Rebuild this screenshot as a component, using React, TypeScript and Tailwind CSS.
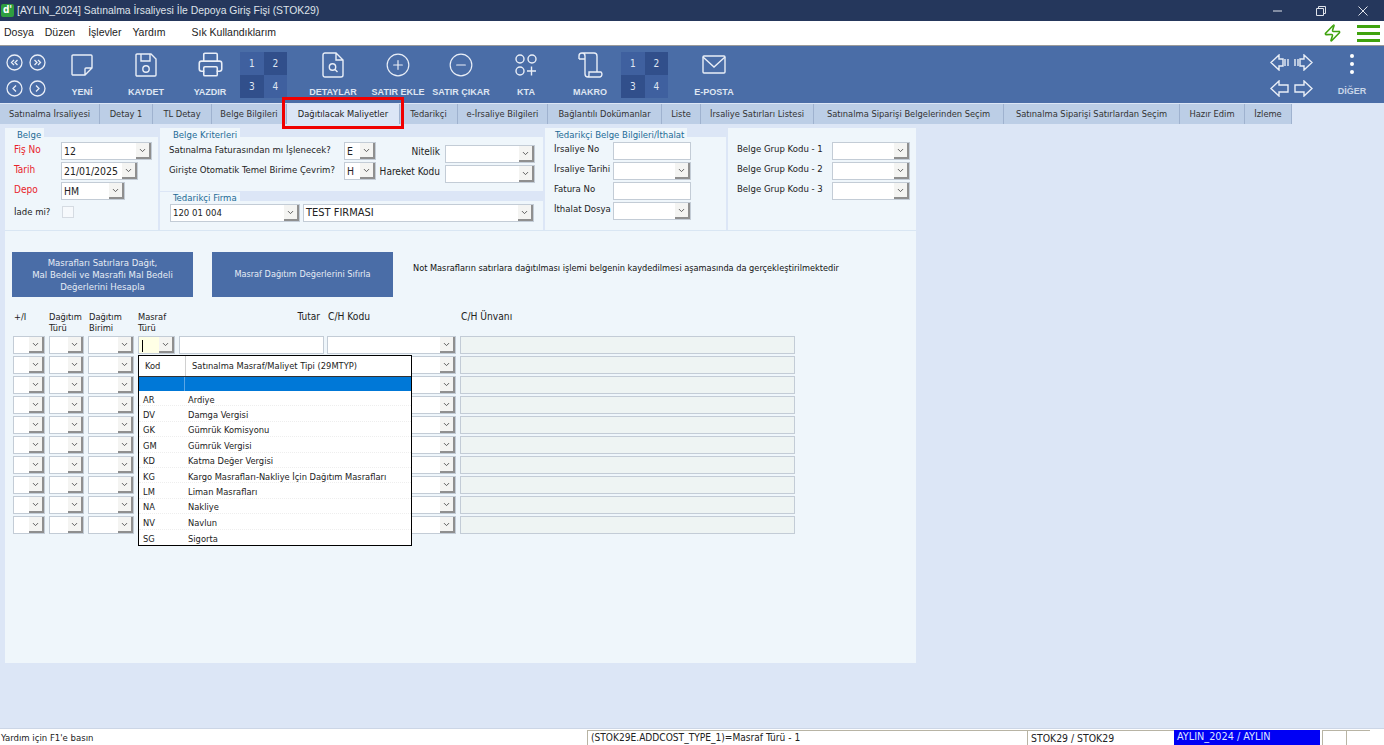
import { CirclePlus, CircleMinus, Printer, Zap, ChevronDown } from 'lucide-react';
import type { ReactNode } from 'react';

const tabs = [
  { label: 'Satınalma İrsaliyesi', w: 'w-[100px]' },
  { label: 'Detay 1', w: 'w-[53px]' },
  { label: 'TL Detay', w: 'w-[59px]' },
  { label: 'Belge Bilgileri', w: 'w-[75px]' },
  { label: 'Dağıtılacak Maliyetler', w: 'w-[113px]', active: true },
  { label: 'Tedarikçi', w: 'w-[58px]' },
  { label: 'e-İrsaliye Bilgileri', w: 'w-[90px]' },
  { label: 'Bağlantılı Dokümanlar', w: 'w-[114px]' },
  { label: 'Liste', w: 'w-[39px]' },
  { label: 'İrsaliye Satırları Listesi', w: 'w-[113px]' },
  { label: 'Satınalma Siparişi Belgelerinden Seçim', w: 'w-[190px]' },
  { label: 'Satınalma Siparişi Satırlardan Seçim', w: 'w-[176px]' },
  { label: 'Hazır Edim', w: 'w-[65px]' },
  { label: 'İzleme', w: 'w-[47px]' },
];

const dropItems = [
  ['AR', 'Ardiye'],
  ['DV', 'Damga Vergisi'],
  ['GK', 'Gümrük Komisyonu'],
  ['GM', 'Gümrük Vergisi'],
  ['KD', 'Katma Değer Vergisi'],
  ['KG', 'Kargo Masrafları-Nakliye İçin Dağıtım Masrafları'],
  ['LM', 'Liman Masrafları'],
  ['NA', 'Nakliye'],
  ['NV', 'Navlun'],
  ['SG', 'Sigorta'],
];

function Combo({ w, value, yellow, caret, cls, size }: { w: string; value?: string; yellow?: boolean; caret?: boolean; cls?: string; size?: string }) {
  return (
    <div className={`${w} h-[18px] shrink-0 flex border border-[#c3ccd6] ${yellow ? 'bg-[#ffffe6]' : 'bg-white'} ${cls ?? ''}`}>
      <div className={`flex-1 min-w-0 pl-[2px] leading-[16px] ${size ?? 'text-[9.5px]'} text-[#222] whitespace-nowrap overflow-hidden`}>
        {caret && <span className="inline-block w-px h-[12px] bg-black align-middle ml-[1px]" />}
        {value}
      </div>
      <div className="w-[15px] shrink-0 flex items-center justify-center bg-[#f4f4f2] border-r-2 border-b-2 border-[#8f8f8f]">
        <ChevronDown className="w-[9px] h-[9px] text-[#555]" strokeWidth={2.5} />
      </div>
    </div>
  );
}

function Input({ w, value }: { w: string; value?: string }) {
  return (
    <div className={`${w} h-[18px] shrink-0 bg-white border border-[#c3ccd6] pl-[2px] leading-[16px] text-[9.5px] text-[#222]`}>{value}</div>
  );
}

function ToolItem({ label, children, cls }: { label: string; children: ReactNode; cls?: string }) {
  return (
    <div className={`w-16 shrink-0 flex flex-col items-center ${cls ?? ''}`}>
      <div className="h-[33px] mt-[2px] flex items-center justify-center text-[#e9eef7]">{children}</div>
      <div className="mt-[5px] font-['Liberation_Sans',sans-serif] text-[9px] font-bold leading-[12px] text-[#dfe6f2] whitespace-nowrap">{label}</div>
    </div>
  );
}

function NumGrid({ cls }: { cls: string }) {
  return (
    <div className={`w-[47px] h-[46px] shrink-0 mt-[6px] grid grid-cols-2 grid-rows-2 text-[10px] text-[#dfe6f2] ${cls}`}>
      <div className="bg-[#3f609f] flex items-center justify-center">1</div>
      <div className="bg-[#314f8b] flex items-center justify-center">2</div>
      <div className="bg-[#314f8b] flex items-center justify-center">3</div>
      <div className="bg-[#3f609f] flex items-center justify-center">4</div>
    </div>
  );
}

function NavCircle({ d }: { d: string }) {
  return (
    <svg width="17" height="17" viewBox="0 0 17 17" fill="none" stroke="#e9eef7" strokeWidth="1.3">
      <circle cx="8.5" cy="8.5" r="7.5" />
      <path d={d} />
    </svg>
  );
}

function SideArrow({ d }: { d: string }) {
  return (
    <svg width="20" height="17" viewBox="0 0 20 17" fill="none" stroke="#e9eef7" strokeWidth="1.4">
      <path d={d} />
    </svg>
  );
}

function GroupTitle({ children, pad }: { children: ReactNode; pad: string }) {
  return (
    <div className="h-[9px] bg-[#dce6f6]">
      <div className={`inline-block h-[9px] bg-[#eff6fb] pr-[3px] text-[9.5px] leading-[13px] text-[#1d6b96] whitespace-nowrap ${pad}`}>{children}</div>
    </div>
  );
}

const rowNums = [0, 1, 2, 3, 4, 5, 6, 7, 8, 9];

export default function App() {
  return (
    <div className="w-[1384px] h-[745px] overflow-hidden relative flex flex-col bg-[#dce6f6] font-['DejaVu_Sans_Condensed','Liberation_Sans',sans-serif]">
      {/* title bar */}
      <div className="h-[21px] shrink-0 bg-[#25375c] flex items-center text-[#dfe3ea]">
        <div className="w-[13px] h-[13px] ml-[1px] rounded-[2px] bg-[#2f9e3f] text-white text-[10px] font-bold leading-[12px] text-center">d'</div>
        <div className="ml-[3px] text-[10.4px] font-['Liberation_Sans',sans-serif] whitespace-nowrap">[AYLIN_2024] Satınalma İrsaliyesi İle Depoya Giriş Fişi (STOK29)</div>
        <div className="ml-auto flex items-center text-[#dfe3ea]">
          <svg width="10" height="10" viewBox="0 0 10 10" className="mr-[33px]" stroke="currentColor"><path d="M0 5h9" /></svg>
          <svg width="10" height="10" viewBox="0 0 10 10" fill="none" className="mr-[32px]" stroke="currentColor"><path d="M2.5 2.5V.5h7v7h-2M.5 2.5h7v7h-7z" /></svg>
          <svg width="10" height="10" viewBox="0 0 10 10" className="mr-[16px]" stroke="currentColor"><path d="M.5.5l9 9M9.5.5l-9 9" /></svg>
        </div>
      </div>

      {/* menu bar */}
      <div className="h-[25px] shrink-0 bg-white border-b border-[#9a9a9a] flex items-center font-['Liberation_Sans',sans-serif] text-[10.5px] text-[#222] pl-[4px]">
        <span>Dosya</span>
        <span className="ml-[11px]">Düzen</span>
        <span className="ml-[13px]">İşlevler</span>
        <span className="ml-[11px]">Yardım</span>
        <span className="ml-[26px]">Sık Kullandıklarım</span>
        <Zap className="ml-auto w-[19px] h-[22px] text-[#3fa30e]" strokeWidth={2} />
        <div className="ml-[15px] mr-[4px] w-[23px] flex flex-col gap-[4px]">
          <div className="h-[3px] bg-[#3fa30e]" />
          <div className="h-[3px] bg-[#3fa30e]" />
          <div className="h-[3px] bg-[#3fa30e]" />
        </div>
      </div>

      {/* toolbar */}
      <div className="h-[57px] shrink-0 bg-[#4a6da7] flex items-start pl-[6px]">
        <div className="w-[40px] shrink-0 grid grid-cols-2 gap-x-[5px] gap-y-[9px] mt-[8px]">
          <NavCircle d="M8 6L5.5 8.5 8 11M11.5 6L9 8.5l2.5 2.5" />
          <NavCircle d="M5.5 6L8 8.5 5.5 11M9 6l2.5 2.5L9 11" />
          <NavCircle d="M10 5.5L7 8.5l3 3" />
          <NavCircle d="M7 5.5l3 3-3 3" />
        </div>
        <ToolItem label="YENİ" cls="ml-[4px]">
          <svg width="24" height="24" viewBox="0 0 24 24" fill="none" stroke="currentColor" strokeWidth="1.4">
            <path d="M3 2h18a1 1 0 0 1 1 1v12l-7 7H3a1 1 0 0 1-1-1V3a1 1 0 0 1 1-1zM22 15h-6a1 1 0 0 0-1 1v6" />
          </svg>
        </ToolItem>
        <ToolItem label="KAYDET">
          <svg width="24" height="26" viewBox="0 0 24 26" fill="none" stroke="currentColor" strokeWidth="1.4">
            <path d="M3 2h14l5 5v16a1 1 0 0 1-1 1H3a1 1 0 0 1-1-1V3a1 1 0 0 1 1-1zM7 2v7h9V2" />
            <circle cx="12" cy="17" r="3.2" />
          </svg>
        </ToolItem>
        <ToolItem label="YAZDIR" cls="-mr-[2px]">
          <Printer className="w-[27px] h-[27px]" strokeWidth={1.4} />
        </ToolItem>
        <NumGrid cls="" />
        <ToolItem label="DETAYLAR" cls="ml-[14px]">
          <svg width="22" height="26" viewBox="0 0 22 26" fill="none" stroke="currentColor" strokeWidth="1.4">
            <path d="M3 1h11l7 7v15a2 2 0 0 1-2 2H3a2 2 0 0 1-2-2V3a2 2 0 0 1 2-2zM14 1v7h7" />
            <circle cx="10.5" cy="15" r="3.2" />
            <path d="M13 17.5l2.5 2.5" />
          </svg>
        </ToolItem>
        <ToolItem label="SATIR EKLE" cls="ml-[1px]">
          <CirclePlus className="w-[26px] h-[26px]" strokeWidth={1.1} />
        </ToolItem>
        <ToolItem label="SATIR ÇIKAR" cls="-ml-[1px]">
          <CircleMinus className="w-[26px] h-[26px]" strokeWidth={1.1} />
        </ToolItem>
        <ToolItem label="KTA" cls="ml-[1px]">
          <svg width="22" height="24" viewBox="0 0 22 24" fill="none" stroke="currentColor" strokeWidth="1.4">
            <circle cx="5" cy="6" r="4" />
            <circle cx="17" cy="6" r="4" />
            <circle cx="5" cy="18" r="4" />
            <path d="M12 18h9M16.5 13.5v9" />
          </svg>
        </ToolItem>
        <ToolItem label="MAKRO">
          <svg width="26" height="26" viewBox="0 0 26 26" fill="none" stroke="currentColor" strokeWidth="1.4">
            <path d="M2 7V4a3 3 0 0 1 6 0v18a3 3 0 0 0 3 3h12a3 3 0 0 0 1-5H12v2a3 3 0 0 1-1 3M5 1h12a3 3 0 0 1 3 3v16M2 7h6" />
          </svg>
        </ToolItem>
        <NumGrid cls="-ml-[1px]" />
        <ToolItem label="E-POSTA" cls="ml-[14px]">
          <svg width="24" height="19" viewBox="0 0 24 19" fill="none" stroke="currentColor" strokeWidth="1.4">
            <rect x="1" y="1" width="22" height="17" rx="1" />
            <path d="M1 2l11 10L23 2" />
          </svg>
        </ToolItem>
        <div className="ml-auto flex items-start">
          <div className="grid grid-cols-2 gap-x-[3px] gap-y-[9px] mt-[8px]">
            <SideArrow d="M9 1L1 8.5 9 16v-4h4V5H9zM15 5v7M18 5v7" />
            <SideArrow d="M11 1l8 7.5L11 16v-4H7V5h4zM5 5v7M2 5v7" />
            <SideArrow d="M9 1L1 8.5 9 16v-4h9V5H9z" />
            <SideArrow d="M11 1l8 7.5L11 16v-4H2V5h9z" />
          </div>
          <div className="w-[64px] ml-[7px] flex flex-col items-center">
            <div className="mt-[8px] flex flex-col gap-[4px]">
              <div className="w-[4px] h-[4px] rounded-full bg-white" />
              <div className="w-[4px] h-[4px] rounded-full bg-white" />
              <div className="w-[4px] h-[4px] rounded-full bg-white" />
            </div>
            <div className="mt-[11px] font-['Liberation_Sans',sans-serif] text-[9px] leading-[12px] font-bold text-[#c9d5e8]">DİĞER</div>
          </div>
        </div>
      </div>

      {/* tabs */}
      <div className="h-[21px] shrink-0 flex pt-[1px]">
        {tabs.map((t) => (
          <div
            key={t.label}
            className={
              t.active
                ? `${t.w} h-[20px] shrink-0 flex items-center justify-center bg-[#dce6f6] border-r border-[#9fb2cf] text-[9.25px] text-[#222] whitespace-nowrap`
                : `${t.w} h-[20px] shrink-0 flex items-center justify-center bg-[#bccee6] border-r border-[#9fb2cf] text-[9.25px] text-[#333] whitespace-nowrap`
            }
          >
            {t.label}
          </div>
        ))}
      </div>

      {/* main form */}
      <div className="w-[911px] h-[535px] ml-[5px] mt-[4px] shrink-0 flex flex-col bg-[#eff6fb]">
        <div className="h-[103px] shrink-0 flex border-b border-[#d9e6f3] text-[9.5px] text-[#222]">
          {/* Belge */}
          <div className="w-[155px] shrink-0 border-r-2 border-[#dce6f6]">
            <GroupTitle pad="pl-[12px]">Belge</GroupTitle>
            <div className="pt-[5px] pl-[8px] flex flex-col gap-[2px]">
              <div className="flex items-center"><span className="w-[48px] pl-[1px] text-[10px] text-[#e8232a] -mt-[3px]">Fiş No</span><Combo w="w-[91px]" value="12" size="text-[10.4px]" /></div>
              <div className="flex items-center"><span className="w-[48px] pl-[1px] text-[10px] text-[#e8232a] -mt-[3px]">Tarih</span><Combo w="w-[77px]" value="21/01/2025" size="text-[10.4px]" /></div>
              <div className="flex items-center"><span className="w-[48px] pl-[1px] text-[10px] text-[#e8232a] -mt-[3px]">Depo</span><Combo w="w-[64px]" value="HM" size="text-[10.4px]" /></div>
              <div className="flex items-center h-[16px] mt-[2px]"><span className="w-[49px] pl-[1px]">İade mi?</span><div className="w-[12px] h-[12px] border border-[#d5dbe2] bg-[#f6f9fc]" /></div>
            </div>
          </div>
          {/* Belge Kriterleri */}
          <div className="w-[385px] shrink-0 border-r-2 border-[#dce6f6]">
            <GroupTitle pad="pl-[13px]">Belge Kriterleri</GroupTitle>
            <div className="pt-[5px] pl-[9px] flex">
              <div className="w-[175px] shrink-0 flex flex-col gap-[2px]">
                <div className="h-[18px] leading-[15px] whitespace-nowrap">Satınalma Faturasından mı İşlenecek?</div>
                <div className="h-[18px] leading-[15px] whitespace-nowrap">Girişte Otomatik Temel Birime Çevrim?</div>
              </div>
              <div className="w-[33px] shrink-0 flex flex-col gap-[2px]">
                <Combo w="w-[32px]" value="E" size="text-[10.4px]" />
                <Combo w="w-[32px]" value="H" size="text-[10.4px]" />
              </div>
              <div className="w-[68px] shrink-0 pr-[5px] pt-[3px] flex flex-col gap-[2px] text-right text-[10px]">
                <div className="h-[18px] leading-[14px]">Nitelik</div>
                <div className="h-[18px] leading-[14px] whitespace-nowrap">Hareket Kodu</div>
              </div>
              <div className="shrink-0 pt-[3px] flex flex-col gap-[2px]">
                <Combo w="w-[90px]" />
                <Combo w="w-[90px]" />
              </div>
            </div>
            <div className="mt-[8px] h-[10px] bg-[#dce6f6]">
              <div className="inline-block h-[10px] bg-[#eff6fb] pl-[13px] pr-[3px] text-[9.5px] leading-[12px] text-[#1d6b96] whitespace-nowrap">Tedarikçi Firma</div>
            </div>
            <div className="mt-[3px] pl-[10px] flex gap-[3px]">
              <Combo w="w-[130px]" value="120 01 004" />
              <Combo w="w-[231px]" value="TEST FIRMASI" size="text-[11px]" />
            </div>
          </div>
          {/* Tedarikci Belge */}
          <div className="w-[183px] shrink-0 border-r-2 border-[#dce6f6]">
            <GroupTitle pad="pl-[10px]">Tedarikçi Belge Bilgileri/İthalat</GroupTitle>
            <div className="pt-[5px] pl-[9px] flex flex-col gap-[2px]">
              <div className="flex"><span className="w-[59px] leading-[14px]">İrsaliye No</span><Input w="w-[78px]" /></div>
              <div className="flex"><span className="w-[59px] leading-[14px]">İrsaliye Tarihi</span><Combo w="w-[78px]" /></div>
              <div className="flex"><span className="w-[59px] leading-[14px]">Fatura No</span><Input w="w-[78px]" /></div>
              <div className="flex"><span className="w-[59px] leading-[14px] whitespace-nowrap">İthalat Dosya</span><Combo w="w-[78px]" /></div>
            </div>
          </div>
          {/* Grup */}
          <div className="flex-1 pt-[14px] pl-[9px] flex flex-col gap-[2px]">
            <div className="flex"><span className="w-[95px] leading-[14px]">Belge Grup Kodu - 1</span><Combo w="w-[78px]" /></div>
            <div className="flex"><span className="w-[95px] leading-[14px]">Belge Grup Kodu - 2</span><Combo w="w-[78px]" /></div>
            <div className="flex"><span className="w-[95px] leading-[14px]">Belge Grup Kodu - 3</span><Combo w="w-[78px]" /></div>
          </div>
        </div>

        {/* buttons */}
        <div className="mt-[21px] ml-[7px] flex items-center text-[9.5px]">
          <div className="w-[181px] h-[45px] bg-[#4a6da7] text-[#e6ecf5] flex items-center justify-center text-center leading-[12px]">
            Masrafları Satırlara Dağıt,<br />Mal Bedeli ve Masraflı Mal Bedeli<br />Değerlerini Hesapla
          </div>
          <div className="w-[181px] h-[45px] ml-[19px] bg-[#4a6da7] text-[#e6ecf5] text-[9.1px] flex items-center justify-center">
            Masraf Dağıtım Değerlerini Sıfırla
          </div>
          <div className="ml-[20px] -mt-[12px] text-[9.15px] text-[#111] whitespace-nowrap">Not Masrafların satırlara dağıtılması işlemi belgenin kaydedilmesi aşamasında da gerçekleştirilmektedir</div>
        </div>

        {/* grid header */}
        <div className="mt-[13px] pt-[1px] ml-[8px] h-[26px] flex text-[9.25px] leading-[11px] text-[#222]">
          <div className="w-[36px] shrink-0 pl-[1px]">+/I</div>
          <div className="w-[39px] shrink-0">Dağıtım<br />Türü</div>
          <div className="w-[50px] shrink-0 pl-[1px]">Dağıtım<br />Birimi</div>
          <div className="w-[41px] shrink-0">Masraf<br />Türü</div>
          <div className="w-[145px] shrink-0 text-right pr-[4px] text-[10px]">Tutar</div>
          <div className="w-[136px] shrink-0 pl-[4px] text-[10.2px]">C/H Kodu</div>
          <div className="flex-1 pl-[1px] text-[10.2px]">C/H Ünvanı</div>
        </div>

        {/* grid rows */}
        <div className="ml-[8px] flex flex-col gap-[2px]">
          {rowNums.map((n) => (
            <div key={n} className="flex gap-[4px]">
              <Combo w="w-[32px]" />
              <Combo w="w-[35px]" />
              <Combo w="w-[46px]" />
              <Combo w="w-[37px]" yellow={n === 0} caret={n === 0} />
              <Input w="w-[145px]" />
              <Combo w="w-[129px]" cls="-ml-[1px]" />
              <div className="w-[335px] h-[18px] shrink-0 bg-[#eef4f3] border border-[#c3ccd6]" />
            </div>
          ))}
        </div>
      </div>

      {/* status bar */}
      <div className="absolute left-0 right-0 bottom-0 h-[17px] bg-white border-t border-[#ccd6e6] flex items-end text-[9.5px] text-[#222]">
        <div className="w-[587px] shrink-0 pl-[1px] leading-[15px]">Yardım için F1'e basın</div>
        <div className="w-[440px] h-[15px] shrink-0 border-l border-t border-[#b8b4a4] pl-[3px] leading-[14px] text-[10.1px]">(STOK29E.ADDCOST_TYPE_1)=Masraf Türü - 1</div>
        <div className="w-[147px] h-[15px] shrink-0 border-l border-t border-[#b8b4a4] pl-[3px] leading-[14px] text-[10.4px]">STOK29 / STOK29</div>
        <div className="w-[146px] h-[15px] shrink-0 bg-[#0000f5] text-[#dfe6ff] pl-[3px] leading-[14px] text-[10.8px]">AYLIN_2024 / AYLIN</div>
        <div className="w-[24px] h-[15px] ml-[2px] shrink-0 border-l border-t border-[#b8b4a4]" />
        <div className="w-[24px] h-[15px] shrink-0 border-l border-t border-[#b8b4a4]" />
      </div>

      {/* open combo list */}
      <div className="absolute left-[138px] top-[355px] w-[274px] h-[191px] bg-white border border-black text-[9.25px] text-[#222]">
        <div className="h-[21px] flex items-center border-b border-[#333]">
          <div className="w-[47px] shrink-0 pl-[6px] border-r border-[#d0d0d0] h-full leading-[20px]">Kod</div>
          <div className="pl-[6px]">Satınalma Masraf/Maliyet Tipi (29MTYP)</div>
        </div>
        <div className="h-[14px] flex bg-[#0078d7]">
          <div className="w-[46px] border-r border-[#5aa6e6]" />
        </div>
        {dropItems.map(([code, name]) => (
          <div key={code} className="h-[15.4px] pt-[2px] flex items-center border-b border-dotted border-[#eeeeee] last:border-b-0 leading-[13px]">
            <div className="w-[49px] shrink-0 pl-[4px]">{code}</div>
            <div className="whitespace-nowrap">{name}</div>
          </div>
        ))}
      </div>

      {/* highlight */}
      <div className="absolute left-[282px] top-[97px] w-[122px] h-[32px] border-[3px] border-[#f00000] pointer-events-none" />
    </div>
  );
}
